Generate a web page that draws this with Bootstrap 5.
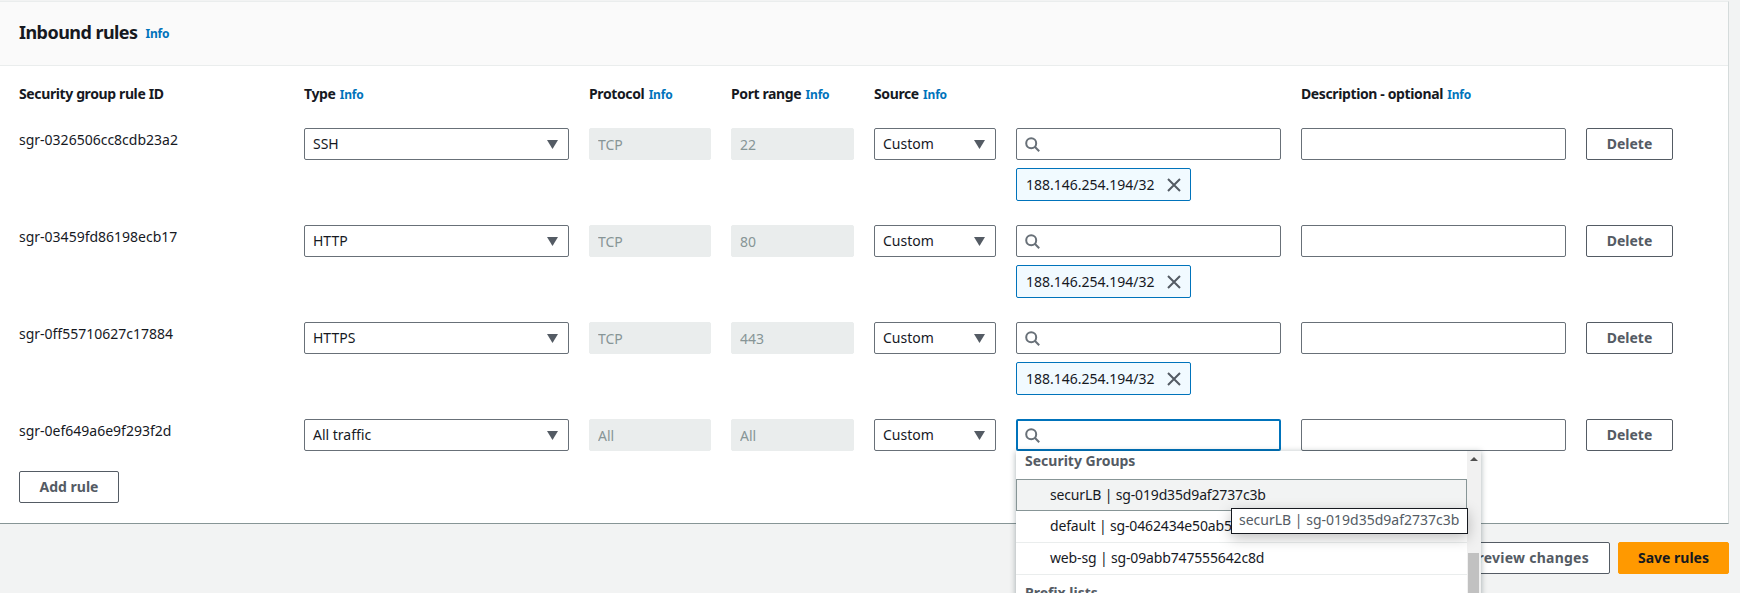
<!doctype html>
<html lang="en"><head><meta charset="utf-8"><title>Inbound rules</title>
<link href="https://cdn.jsdelivr.net/npm/bootstrap@5.3.0/dist/css/bootstrap.min.css" rel="stylesheet">
<style>
html,body{height:593px;overflow:hidden}
body{background:#f2f3f3;font-family:"Noto Sans","Open Sans",sans-serif;font-size:14px;color:#16191f;line-height:20px;padding-top:1px}
.rules-card{margin-right:11px;background:#fff;border:0;border-top:1px solid #eaeded;border-right:1px solid #d5dbdb;border-bottom:1px solid #879596;border-radius:0;height:523px}
.rules-head{height:64px;background:#fafafa;border-bottom:1px solid #eaeded;padding:0 0 3px 19px;gap:8px}
.rules-head h2{font-size:18px;font-weight:700;margin:0;line-height:24px;letter-spacing:-.55px}
.rules-head .info-link{padding-top:3px}
.info-link{font-size:12px;font-weight:700;color:#0073bb;text-decoration:none;letter-spacing:-.2px}
.rules-body{padding:18px 0 0 19px}
.rule-grid{display:grid;grid-template-columns:265px 265px 122px 123px 122px 265px 265px 87px;column-gap:20px}
.col-label{font-weight:700;font-size:14px;line-height:20px;height:20px;white-space:nowrap;margin-bottom:24px;letter-spacing:-.38px}
.col-label .info-link{margin-left:1px}
.rule-row{margin-bottom:24px}
.rule-row.last{margin-bottom:20px}
.rule-id{font-size:14px;padding-top:2px;line-height:20px}
.ctl{height:32px;border:1px solid #687078;border-radius:2px;background:#fff;color:#16191f;font-size:14px;line-height:20px;padding:5px 8px;box-shadow:none;width:100%}
.ctl-sel{padding:5px 10px 5px 8px;text-align:left}
.ctl:disabled{background:#eaeded;border-color:#eaeded;color:#879596;opacity:1}
.btn-aws{height:32px;border:1px solid #545b64;border-radius:2px;background:#fff;color:#545b64;font-size:14px;font-weight:700;line-height:20px;padding:5px 20px;white-space:nowrap}
.btn-del{width:87px;padding:5px 0}
.btn-add{width:100px;padding:5px 0}
.btn-preview{letter-spacing:.25px}
.btn-save{background:#f90;border-color:#f90;color:#16191f;width:111px;padding:5px 0}
.search-box{gap:7px;padding:5px 8px}
.search-box.on{border:2px solid #0073bb;padding:4px 7px}
.token-chip{width:175px;height:33px;margin-top:8px;background:#f1faff;border:1px solid #0073bb;border-radius:2px;padding:0 9px 0 9px;white-space:nowrap}
.drop-cell{position:relative}
.drop-panel{position:absolute;left:0;top:32px;width:465px;height:150px;background:#fff;overflow:hidden;z-index:5;box-shadow:0 1px 6px rgba(0,28,36,.35)}
.drop-list{width:451px}
.drop-title{font-weight:700;color:#545b64;padding-left:9px;height:28px;line-height:20px}
.drop-opt{height:32px;padding:5px 0 0 34px;border:0;border-bottom:1px solid #eaeded;white-space:nowrap;border-radius:0;background:#fff;color:#16191f;letter-spacing:-.15px}
.drop-opt.hot{background:#f2f3f3;border:1px solid #879596;padding:5px 0 0 33px}
.drop-title.next{margin-top:8px}
.scroll-track{position:absolute;right:0;top:0;bottom:0;width:14px;background:#f1f1f1}
.scroll-up{position:absolute;left:3px;top:6px;width:0;height:0;border-left:4px solid transparent;border-right:4px solid transparent;border-bottom:4px solid #505050}
.scroll-thumb{position:absolute;left:1px;top:102px;width:11px;height:60px;background:#c1c1c1}
.tip-box{position:absolute;left:215px;top:89px;width:237px;height:26px;background:#fff;border:1px solid #16191f;color:#545b64;padding:1px 0 0 7px;white-space:nowrap;z-index:6;box-shadow:0 4px 14px rgba(0,0,0,.25)}
.page-foot{margin-right:11px;padding-top:18px;gap:8px}
</style></head><body>
<div class="card rules-card">
  <div class="rules-head d-flex align-items-center"><h2>Inbound rules</h2><a class="info-link" href="#">Info</a></div>
  <div class="rules-body">
    <div class="rule-grid">
      <div class="col-label">Security group rule ID</div>
      <div class="col-label">Type <a class="info-link" href="#">Info</a></div>
      <div class="col-label">Protocol <a class="info-link" href="#">Info</a></div>
      <div class="col-label">Port range <a class="info-link" href="#">Info</a></div>
      <div class="col-label">Source <a class="info-link" href="#">Info</a></div>
      <div class="col-label"></div>
      <div class="col-label">Description - optional <a class="info-link" href="#">Info</a></div>
      <div class="col-label"></div>
    </div>

    <div class="rule-grid rule-row">
      <div class="rule-id">sgr-0326506cc8cdb23a2</div>
      <button class="ctl ctl-sel d-flex justify-content-between align-items-center" type="button">SSH <svg width="11" height="9" viewBox="0 0 10 8"><path d="M0 0h10L5 8z" fill="#545b64"/></svg></button>
      <input class="ctl" value="TCP" disabled><input class="ctl" value="22" disabled>
      <button class="ctl ctl-sel d-flex justify-content-between align-items-center" type="button">Custom <svg width="11" height="9" viewBox="0 0 10 8"><path d="M0 0h10L5 8z" fill="#545b64"/></svg></button>
      <div>
        <div class="ctl search-box d-flex align-items-center"><svg width="15" height="15" viewBox="0 0 15 15" fill="none" stroke="#687078" stroke-width="2"><circle cx="6.2" cy="6.2" r="5"/><path d="M9.8 9.8l4.4 4.4"/></svg></div>
        <div class="token-chip d-flex align-items-center justify-content-between">188.146.254.194/32 <svg width="14" height="14" viewBox="0 0 14 14" fill="none" stroke="#545b64" stroke-width="2"><path d="M1 1l12 12M13 1L1 13"/></svg></div>
      </div>
      <input class="ctl" aria-label="Description">
      <button class="btn-aws btn-del" type="button">Delete</button>
    </div>

    <div class="rule-grid rule-row">
      <div class="rule-id">sgr-03459fd86198ecb17</div>
      <button class="ctl ctl-sel d-flex justify-content-between align-items-center" type="button">HTTP <svg width="11" height="9" viewBox="0 0 10 8"><path d="M0 0h10L5 8z" fill="#545b64"/></svg></button>
      <input class="ctl" value="TCP" disabled><input class="ctl" value="80" disabled>
      <button class="ctl ctl-sel d-flex justify-content-between align-items-center" type="button">Custom <svg width="11" height="9" viewBox="0 0 10 8"><path d="M0 0h10L5 8z" fill="#545b64"/></svg></button>
      <div>
        <div class="ctl search-box d-flex align-items-center"><svg width="15" height="15" viewBox="0 0 15 15" fill="none" stroke="#687078" stroke-width="2"><circle cx="6.2" cy="6.2" r="5"/><path d="M9.8 9.8l4.4 4.4"/></svg></div>
        <div class="token-chip d-flex align-items-center justify-content-between">188.146.254.194/32 <svg width="14" height="14" viewBox="0 0 14 14" fill="none" stroke="#545b64" stroke-width="2"><path d="M1 1l12 12M13 1L1 13"/></svg></div>
      </div>
      <input class="ctl" aria-label="Description">
      <button class="btn-aws btn-del" type="button">Delete</button>
    </div>

    <div class="rule-grid rule-row">
      <div class="rule-id">sgr-0ff55710627c17884</div>
      <button class="ctl ctl-sel d-flex justify-content-between align-items-center" type="button">HTTPS <svg width="11" height="9" viewBox="0 0 10 8"><path d="M0 0h10L5 8z" fill="#545b64"/></svg></button>
      <input class="ctl" value="TCP" disabled><input class="ctl" value="443" disabled>
      <button class="ctl ctl-sel d-flex justify-content-between align-items-center" type="button">Custom <svg width="11" height="9" viewBox="0 0 10 8"><path d="M0 0h10L5 8z" fill="#545b64"/></svg></button>
      <div>
        <div class="ctl search-box d-flex align-items-center"><svg width="15" height="15" viewBox="0 0 15 15" fill="none" stroke="#687078" stroke-width="2"><circle cx="6.2" cy="6.2" r="5"/><path d="M9.8 9.8l4.4 4.4"/></svg></div>
        <div class="token-chip d-flex align-items-center justify-content-between">188.146.254.194/32 <svg width="14" height="14" viewBox="0 0 14 14" fill="none" stroke="#545b64" stroke-width="2"><path d="M1 1l12 12M13 1L1 13"/></svg></div>
      </div>
      <input class="ctl" aria-label="Description">
      <button class="btn-aws btn-del" type="button">Delete</button>
    </div>

    <div class="rule-grid rule-row last">
      <div class="rule-id">sgr-0ef649a6e9f293f2d</div>
      <button class="ctl ctl-sel d-flex justify-content-between align-items-center" type="button">All traffic <svg width="11" height="9" viewBox="0 0 10 8"><path d="M0 0h10L5 8z" fill="#545b64"/></svg></button>
      <input class="ctl" value="All" disabled><input class="ctl" value="All" disabled>
      <button class="ctl ctl-sel d-flex justify-content-between align-items-center" type="button">Custom <svg width="11" height="9" viewBox="0 0 10 8"><path d="M0 0h10L5 8z" fill="#545b64"/></svg></button>
      <div class="drop-cell">
        <div class="ctl search-box on d-flex align-items-center"><svg width="15" height="15" viewBox="0 0 15 15" fill="none" stroke="#687078" stroke-width="2"><circle cx="6.2" cy="6.2" r="5"/><path d="M9.8 9.8l4.4 4.4"/></svg></div>
        <div class="drop-panel">
          <div class="drop-list">
            <div class="drop-title">Security Groups</div>
            <div class="drop-opt hot">securLB | sg-019d35d9af2737c3b</div>
            <div class="drop-opt">default | sg-0462434e50ab5f3d1</div>
            <div class="drop-opt">web-sg | sg-09abb747555642c8d</div>
            <div class="drop-title next">Prefix lists</div>
          </div>
          <div class="scroll-track"><div class="scroll-up"></div><div class="scroll-thumb"></div></div>
        </div>
        <div class="tip-box">securLB | sg-019d35d9af2737c3b</div>
      </div>
      <input class="ctl" aria-label="Description">
      <button class="btn-aws btn-del" type="button">Delete</button>
    </div>
    <button class="btn-aws btn-add" type="button">Add rule</button>
  </div>
</div>
<div class="page-foot d-flex justify-content-end">
  <button class="btn-aws btn-preview" type="button">Preview changes</button>
  <button class="btn-aws btn-save" type="button">Save rules</button>
</div>
</body></html>
